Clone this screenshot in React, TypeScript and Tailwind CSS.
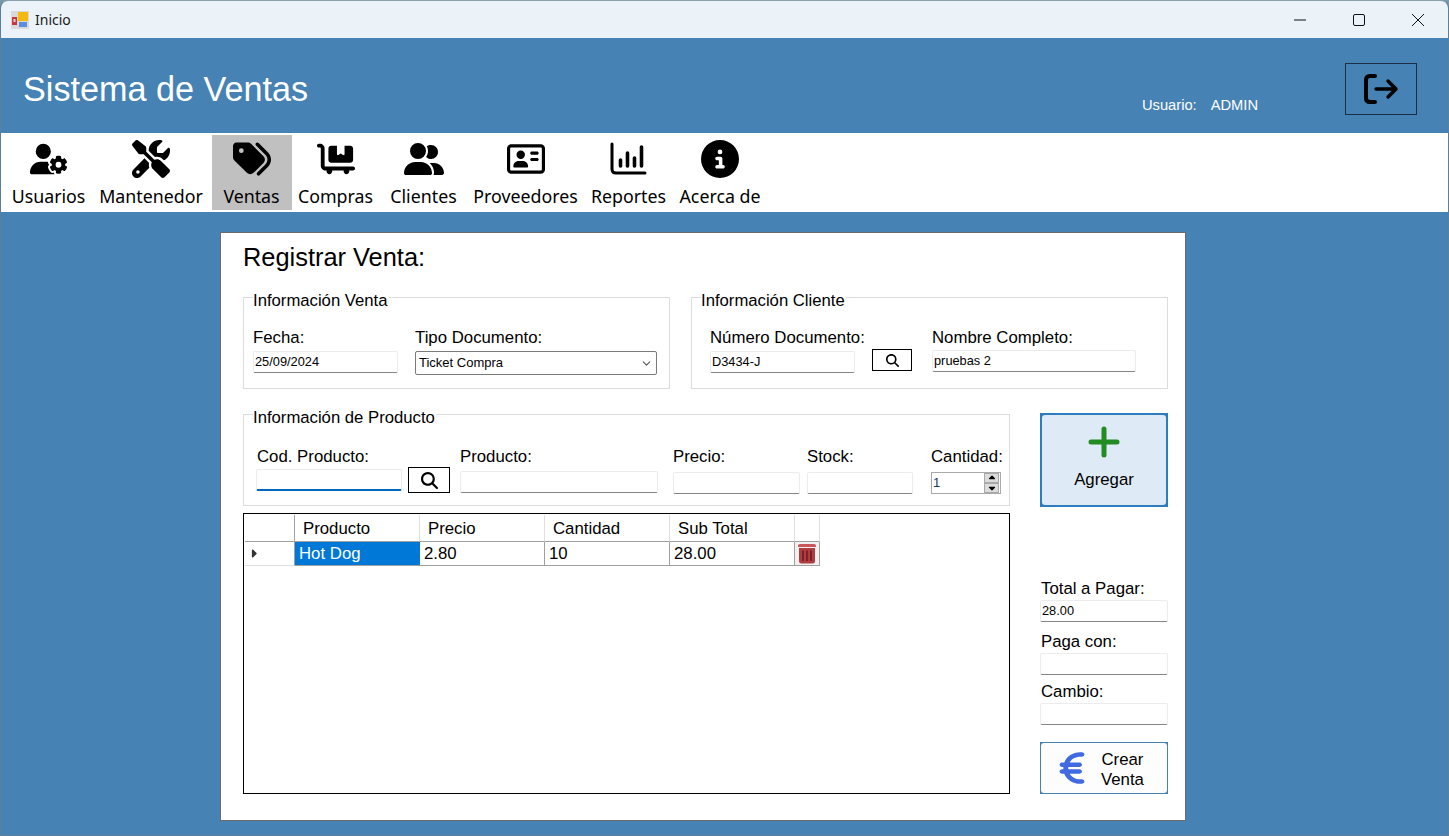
import React from 'react';
import { FaUserGear, FaScrewdriverWrench, FaTags, FaCartFlatbed, FaUserGroup, FaRegAddressCard, FaCircleInfo, FaMagnifyingGlass, FaEuroSign, FaCaretRight, FaCaretUp, FaCaretDown } from 'react-icons/fa6';
import { LuChevronDown } from 'react-icons/lu';

const ChartIcon = () => (
  <svg width="37" height="33" viewBox="0 0 37 33" fill="none" stroke="black" strokeLinecap="round">
    <path d="M2 2V27Q2 31 6 31H35" strokeWidth="3" />
    <path d="M10.5 18V24M17.5 11V24M24.5 16V24M31.5 5V24" strokeWidth="3.6" />
  </svg>
);

const LogoutIcon = () => (
  <svg width="36" height="32" viewBox="0 0 36 32" fill="none" stroke="black" strokeLinecap="round" strokeLinejoin="round">
    <path d="M12 3H7Q3 3 3 7V25Q3 29 7 29H12" strokeWidth="4" />
    <path d="M13 16H33M25 8L33 16L25 24" strokeWidth="3.4" />
  </svg>
);

const TrashIcon = () => (
  <svg width="20" height="21" viewBox="0 0 20 21">
    <path d="M1 2.5Q1 1 3 1H17Q19 1 19 2.5V4H1Z" fill="#c8565a" />
    <path d="M2 5H18V18Q18 20.5 15.5 20.5H4.5Q2 20.5 2 18Z" fill="#b03c41" />
    <path d="M6 7.5V18M10 7.5V18M14 7.5V18" stroke="#6e1c20" strokeWidth="1.6" />
  </svg>
);

const PlusIcon = () => (
  <svg width="32" height="32" viewBox="0 0 32 32" stroke="#228b22" strokeWidth="5" strokeLinecap="round">
    <path d="M16 3V29M3 16H29" />
  </svg>
);

const menu = [
  { label: 'Usuarios', icon: <FaUserGear size={38} />, w: 'w-[88px]', pad: 'pl-[3px]' },
  { label: 'Mantenedor', icon: <FaScrewdriverWrench size={38} />, w: 'w-[121px]', pad: 'pr-[1px]' },
  { label: 'Ventas', icon: <FaTags size={38} />, w: 'w-[80px]', pad: 'pr-[1px]', active: true },
  { label: 'Compras', icon: <FaCartFlatbed size={38} />, w: 'w-[87px]' },
  { label: 'Clientes', icon: <FaUserGroup size={40} />, w: 'w-[89px]' },
  { label: 'Proveedores', icon: <FaRegAddressCard size={38} />, w: 'w-[115px]' },
  { label: 'Reportes', icon: <ChartIcon />, w: 'w-[91px]' },
  { label: 'Acerca de', icon: <FaCircleInfo size={38} />, w: 'w-[92px]' },
];

const Field = ({ value = '', className = '', focus = false }: { value?: string; className?: string; focus?: boolean }) => (
  <div className={`h-[22px] bg-white border border-[#ececec] rounded-[2px] flex items-center pl-[1px] text-[12.8px] text-black ${focus ? 'border-b-2 border-b-[#0067c0]' : 'border-b-[#858585]'} ${className}`}>
    {value}
  </div>
);

const Label = ({ children, className = '' }: { children: React.ReactNode; className?: string }) => (
  <div className={`text-[16.8px] leading-[18px] text-black ${className}`}>{children}</div>
);

const Group = ({ title, className = '', legendClass = '', children }: { title: string; className?: string; legendClass?: string; children: React.ReactNode }) => (
  <fieldset className={`border border-[#dcdcdc] pl-[9px] ${className}`}>
    <legend className={`relative top-[4px] text-[16.7px] leading-[18px] pr-[1px] ${legendClass}`}>{title}</legend>
    {children}
  </fieldset>
);

const SearchButton = ({ className = '', size = 14 }: { className?: string; size?: number }) => (
  <div className={`border border-black flex items-center justify-center bg-white ${className}`}>
    <FaMagnifyingGlass size={size} />
  </div>
);

const columns = ['Producto', 'Precio', 'Cantidad', 'Sub Total'];

export default function App() {
  return (
    <div className="w-[1449px] h-[836px] overflow-hidden bg-[#7a99a8] font-['Liberation_Sans',sans-serif]">
      <div className="w-full h-full rounded-t-[8px] overflow-hidden border-x border-b border-[#5d7f9c] border-t border-t-[#8aa0ac] flex flex-col bg-[#4682b4]">
        {/* title bar */}
        <div className="h-[37px] bg-[#ebf3f9] flex items-center shrink-0">
          <svg width="18" height="18" viewBox="0 0 18 18" className="ml-[10px]">
            <rect width="18" height="18" fill="#d9d9d9" />
            <rect x="1" y="6" width="5" height="8" fill="#c9353b" />
            <rect x="2.5" y="8" width="2" height="3" fill="#f4d4d4" />
            <rect x="7" y="1" width="10" height="9" fill="#f2b90f" />
            <rect x="8" y="11" width="8" height="5" fill="#5a8fe0" />
          </svg>
          <span className="ml-[6px] text-[14px] text-[#1a1a1a] font-['Noto_Sans',sans-serif]">Inicio</span>
          <div className="ml-auto flex items-center">
            <svg width="12" height="12" viewBox="0 0 12 12" className="mr-[47px]"><path d="M0 6H12" stroke="#111" /></svg>
            <svg width="12" height="12" viewBox="0 0 12 12" className="mr-[47px]"><rect x=".5" y=".5" width="11" height="11" rx="1.5" fill="none" stroke="#111" /></svg>
            <svg width="12" height="12" viewBox="0 0 12 12" className="mr-[24px]"><path d="M0 0L12 12M12 0L0 12" stroke="#111" /></svg>
          </div>
        </div>

        {/* header */}
        <div className="h-[95px] shrink-0 flex items-start text-white">
          <div className="text-[34.2px] leading-[38px] ml-[22px] mt-[32px]">Sistema de Ventas</div>
          <div className="ml-auto mt-[58px] text-[14.7px] leading-[18px] flex">
            <span>Usuario:</span>
            <span className="ml-[14px]">ADMIN</span>
          </div>
          <div className="ml-[87px] mr-[31px] mt-[25px] w-[72px] h-[52px] border border-[#1b2f44] flex items-center justify-center">
            <LogoutIcon />
          </div>
        </div>

        {/* menu */}
        <div className="h-[79px] shrink-0 bg-white flex pl-[2px] pt-[2px] font-['Noto_Sans',sans-serif]">
          {menu.map((m) => (
            <div key={m.label} className={`${m.w} ${m.pad ?? ''} h-[75px] flex flex-col items-center ${m.active ? 'bg-[#c0c0c0]' : ''}`}>
              <div className="h-[46px] flex items-center justify-center pt-[1px]">{m.icon}</div>
              <span className="text-[17.8px] leading-[26px] mt-[2px] text-black whitespace-nowrap">{m.label}</span>
            </div>
          ))}
        </div>

        {/* panel */}
        <div className="w-[966px] h-[589px] ml-[219px] mt-[20px] bg-white border border-[#6b6b6b] pl-[22px] pr-[17px] text-black">
          <div className="text-[25.4px] leading-[28px] mt-[10px] h-[54px]">Registrar Venta:</div>

          <div className="flex">
            <Group title="Información Venta" className="w-[427px] h-[101px] -mt-[9px] flex">
              <div className="flex mt-[23px]">
                <div className="w-[162px]">
                  <Label>Fecha:</Label>
                  <Field value="25/09/2024" className="w-[145px] mt-[4px]" />
                </div>
                <div>
                  <Label>Tipo Documento:</Label>
                  <div className="w-[242px] h-[24px] mt-[4px] border border-[#7a7a7a] rounded-[2px] flex items-center justify-between pl-[3px] pr-[3px] text-[13px]">
                    Ticket Compra
                    <LuChevronDown size={13} className="text-[#555]" />
                  </div>
                </div>
              </div>
            </Group>
            <Group title="Información Cliente" className="w-[477px] h-[101px] -mt-[9px] ml-[21px] flex">
              <div className="flex mt-[23px] ml-[9px]">
                <div className="w-[162px]">
                  <Label>Número Documento:</Label>
                  <Field value="D3434-J" className="w-[145px] mt-[4px] pl-0" />
                </div>
                <SearchButton className="w-[40px] h-[22px] mt-[20px]" size={13} />
                <div className="ml-[20px]">
                  <Label>Nombre Completo:</Label>
                  <Field value="pruebas 2" className="w-[204px] mt-[3px]" />
                </div>
              </div>
            </Group>
          </div>

          <div className="flex mt-[16px]">
            <div className="w-[767px]">
              <Group title="Información de Producto" className="h-[101px] pl-[12px]" legendClass="-ml-[3px]">
                <div className="flex mt-[25px]">
                  <div className="w-[152px]">
                    <Label className="ml-[1px]">Cod. Producto:</Label>
                    <Field focus className="w-[146px] mt-[3px]" />
                  </div>
                  <SearchButton className="w-[42px] h-[26px] mt-[19px]" size={17} />
                  <div className="w-[213px] ml-[10px]">
                    <Label>Producto:</Label>
                    <Field className="w-[198px] mt-[5px]" />
                  </div>
                  <div className="w-[134px]">
                    <Label>Precio:</Label>
                    <Field className="w-[127px] mt-[6px]" />
                  </div>
                  <div className="w-[124px]">
                    <Label>Stock:</Label>
                    <Field className="w-[106px] mt-[6px]" />
                  </div>
                  <div>
                    <Label>Cantidad:</Label>
                    <div className="w-[70px] h-[22px] mt-[6px] border border-[#a9a9a9] flex items-center pl-[1px] text-[13px] text-[#10386b]">
                      1
                      <div className="ml-auto w-[15px] h-[20px] flex flex-col mr-[1px]">
                        <div className="h-[10px] bg-[#dcdcdc] border border-[#a9a9a9] flex items-center justify-center"><FaCaretUp size={10} className="text-black" /></div>
                        <div className="h-[10px] bg-[#dcdcdc] border border-[#a9a9a9] flex items-center justify-center"><FaCaretDown size={10} className="text-black" /></div>
                      </div>
                    </div>
                  </div>
                </div>
              </Group>

              <div className="mt-[7px] w-[767px] h-[281px] border border-black p-[1px]">
                <div className="flex h-[27px] text-[16.8px]">
                  <div className="w-[50px] border-r border-b border-[#a0a0a0]" />
                  {columns.map((c) => (
                    <div key={c} className="w-[125px] border-r border-r-[#e0e0e0] border-b border-b-[#a0a0a0] pl-[8px] flex items-center pt-[1px]">{c}</div>
                  ))}
                  <div className="w-[25px] border-r border-r-[#e0e0e0] border-b border-b-[#a0a0a0]" />
                </div>
                <div className="flex h-[24px] text-[16.8px]">
                  <div className="w-[50px] border-r border-r-[#a0a0a0] border-b border-b-[#e0e0e0] flex items-center pl-[2px]"><FaCaretRight size={13} className="text-[#333]" /></div>
                  <div className="w-[125px] bg-[#0078d7] text-white pl-[4px] pt-[1px] flex items-center border-b border-b-[#a0a0a0]">Hot Dog</div>
                  {['2.80', '10', '28.00'].map((v) => (
                    <div key={v} className="w-[125px] border-r border-b border-[#a0a0a0] pl-[4px] pt-[1px] flex items-center">{v}</div>
                  ))}
                  <div className="w-[25px] border-r border-b border-[#a0a0a0] bg-[#f0f0f0] flex items-center justify-center">
                    <TrashIcon />
                  </div>
                </div>
              </div>
            </div>

            <div className="w-[128px] ml-[30px] flex flex-col">
              <div className="h-[94px] mt-[8px] bg-[#2c7cc0] p-[2px]">
                <div className="h-full rounded-[3px] bg-[#deebf7] flex flex-col items-center">
                  <div className="mt-[11px]"><PlusIcon /></div>
                  <span className="text-[16.8px] leading-[18px] mt-[13px]">Agregar</span>
                </div>
              </div>
              <Label className="mt-[73px] ml-[1px]">Total a Pagar:</Label>
              <Field value="28.00" className="mt-[2px] w-[128px]" />
              <Label className="mt-[11px] ml-[1px]">Paga con:</Label>
              <Field className="mt-[2px] w-[128px]" />
              <Label className="mt-[8px] ml-[1px]">Cambio:</Label>
              <Field className="mt-[2px] w-[128px]" />
              <div className="mt-[17px] h-[52px] bg-[#4682b4] p-[1px]">
                <div className="h-full rounded-[3px] bg-[#fdfdfd] flex items-center">
                  <FaEuroSign size={36} className="text-[#4169e1] ml-[13px] scale-x-[1.1]" />
                  <span className="text-[16.8px] leading-[20px] text-center ml-[11px] mt-[3px]">Crear<br />Venta</span>
                </div>
              </div>
            </div>
          </div>
        </div>
      </div>
    </div>
  );
}
